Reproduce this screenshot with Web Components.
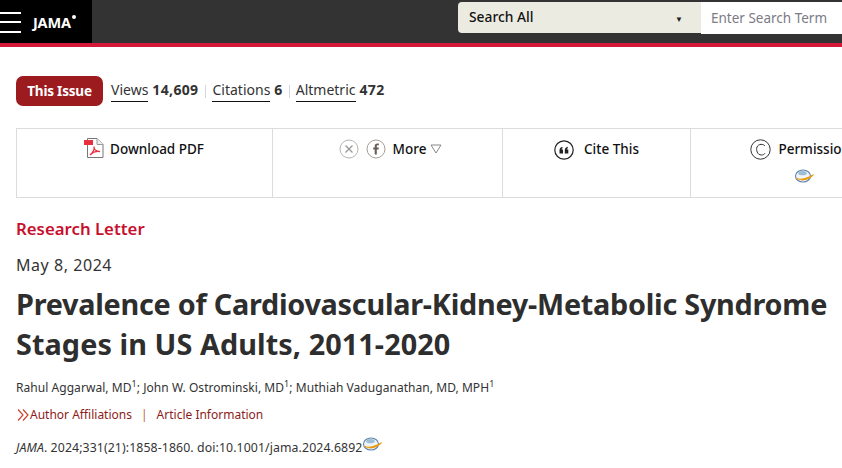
<!DOCTYPE html>
<html lang="en">
<head>
<meta charset="utf-8">
<title>JAMA</title>
<style>
html, body { margin: 0; height: 468px; overflow: hidden; background: #fff; }
body { font-family: "Noto Sans", sans-serif; color: #333; width: 842px; }
</style>
</head>
<body>
<site-header></site-header>
<article-page></article-page>

<script>
const crossrefIcon = (w) => `<svg width="${w}" viewBox="0 0 20 14" aria-hidden="true" style="display:block"><ellipse cx="9" cy="7" rx="7.500" ry="6" fill="#eef4f9" stroke="#5f84aa" stroke-width="1.100"/><ellipse cx="8.500" cy="4.200" rx="4.200" ry="2.100" fill="#9dbcd6"/><path d="M2 9.200C6 11 12.500 10 19.500 5.600 15.500 10 11 11.200 7 10.800" fill="#f0a020" stroke="#eb9a12" stroke-width="1.100"/></svg>`;

class SiteHeader extends HTMLElement {
    connectedCallback() {
        if (this.shadowRoot) return;
        let shadowRoot = this.attachShadow({mode: 'open'});
        shadowRoot.innerHTML = `
        <style>
            :host { display: flex; height: 43px; background: #333; border-bottom: 4px solid #d5173a; width: 842px; overflow: hidden; }
            .brand { width: 92px; background: #000; display: flex; align-items: center; gap: 12px; flex: none; }
            .burger { width: 21px; height: 21px; display: flex; flex-direction: column; justify-content: space-between; margin-top: 1px; }
            .burger i { display: block; height: 2px; background: #fff; }
            .logo { color: #fff; font: 700 14.500px "Noto Sans", sans-serif; letter-spacing: -.2px; margin-top: 1px; display: flex; }
            .logo i { width: 4px; height: 4px; border-radius: 50%; background: #fff; margin: 3px 0 0 1px; }
            .search { margin-left: 366px; margin-top: 2px; display: flex; height: 31px; flex: none; }
            .select { width: 243px; height: 31px; box-sizing: border-box; background: #ecebe2; border-radius: 4px 0 0 4px; display: flex; justify-content: space-between; padding: 0 18px 2px 11px; align-items: center; font-size: 13.800px; font-weight: 500; color: #111; }
            .select b { font-size: 8px; color: #222; margin-top: 3px; }
            .input { width: 141px; height: 32px; box-sizing: border-box; background: #fff; padding-left: 10px; display: flex; align-items: center; font-size: 13.500px; color: #7b7b86; }
        </style>
        <div class="brand">
            <div class="burger"><i></i><i></i><i></i></div>
            <div class="logo"><span>JAMA</span><i></i></div>
        </div>
        <div class="search">
            <div class="select"><span>Search All</span><b>▼</b></div>
            <div class="input">Enter Search Term</div>
        </div>`;
    }
}

class MetricLink extends HTMLElement {
    connectedCallback() {
        if (this.shadowRoot) return;
        let shadowRoot = this.attachShadow({mode: 'open'});
        shadowRoot.innerHTML = `
        <style>
            :host { display: inline-flex; gap: 4px; align-items: baseline; font-size: 14px; color: #333; }
            span { border-bottom: 1px solid #111; padding-bottom: 2px; }
            b { font-weight: 700; letter-spacing: .35px; }
        </style>
        <span>${this.getAttribute('label')}</span><b>${this.getAttribute('value')}</b>`;
    }
}

class MetricsBar extends HTMLElement {
    connectedCallback() {
        if (this.shadowRoot) return;
        let shadowRoot = this.attachShadow({mode: 'open'});
        shadowRoot.innerHTML = `
        <style>
            :host { display: flex; align-items: center; height: 30px; margin: 29px 0 0 16px; }
            .badge { width: 87px; height: 30px; background: #9b1b1f; color: #fff; border-radius: 7px; font-size: 13.500px; font-weight: 700; display: flex; align-items: center; justify-content: center; margin-right: 8px; letter-spacing: -.2px; }
            i { width: 1px; height: 13px; background: #d2d5dc; margin: 0 6px 0 7px; }
        </style>
        <div class="badge">This Issue</div>
        <metric-link label="Views" value="14,609"></metric-link><i></i>
        <metric-link label="Citations" value="6"></metric-link><i style="margin-left:6px"></i>
        <metric-link label="Altmetric" value="472"></metric-link>`;
    }
}

class ToolCell extends HTMLElement {
    connectedCallback() {
        if (this.shadowRoot) return;
        let shadowRoot = this.attachShadow({mode: 'open'});
        shadowRoot.innerHTML = `
        <style>
            :host { display: flex; flex-direction: column; align-items: center; box-sizing: border-box; height: 68px; border-right: 1px solid #dcdcdc; padding-top: 8px; flex: none; color: #111; font-size: 13.500px; font-weight: 500; white-space: nowrap; }
            :host(:last-child) { border-right: 0; }
            .row { display: flex; align-items: center; gap: 7px; height: 24px; }
            .below { margin-top: 8px; height: 14px; display: flex; }
        </style>
        <div class="row"><slot></slot></div>
        <div class="below"><slot name="below"></slot></div>`;
    }
}

class ActionToolbar extends HTMLElement {
    connectedCallback() {
        if (this.shadowRoot) return;
        let shadowRoot = this.attachShadow({mode: 'open'});
        shadowRoot.innerHTML = `
        <style>
            :host { display: flex; margin: 22px 0 0 16px; height: 70px; border: 1px solid #dcdcdc; border-width: 1px 0 1px 1px; box-sizing: border-box; width: 826px; overflow: hidden; }
            svg { display: block; flex: none; }
        </style>
        <tool-cell style="width:254px;margin-right:1px;border-right:0">
            <svg width="20" height="20" viewBox="0 0 20 20" aria-hidden="true" style="margin-right:-1px;margin-top:-3px"><path d="M3.500 .5H13L19 6.500V19.500H3.500Z" fill="#fff" stroke="#777" stroke-width="1"/><path d="M13 .5V6.500H19" fill="#eee" stroke="#999"/><rect x="0" y="2" width="9" height="5" fill="#e8303c"/><path d="M6 17C9 14.500 10.500 11 10 8.500 10 11 12 13.500 16 13.700 12.500 13 8.500 14.500 6 17Z" fill="none" stroke="#e8303c" stroke-width="1.200"/></svg>
            <span>Download PDF</span>
        </tool-cell>
        <tool-cell style="width:231px;padding-left:6px;border-left:1px solid #dcdcdc">
            <svg width="20" height="20" viewBox="0 0 20 20" aria-hidden="true"><circle cx="10" cy="10" r="9" fill="none" stroke="#b9b4ae"/><path d="M6.500 6.500L13.500 13.500M13.500 6.500L6.500 13.500" stroke="#9a9a9a" stroke-width="1.400"/></svg>
            <svg width="20" height="20" viewBox="0 0 20 20" aria-hidden="true"><circle cx="10" cy="10" r="9" fill="none" stroke="#a89e94"/><path d="M10.800 15.500V10.400H12.600L12.800 8.500H10.800V7.300C10.800 6.700 11 6.300 11.900 6.300H12.900V4.600H11.300C9.600 4.600 8.700 5.600 8.700 7.100V8.500H7.200V10.400H8.700V15.500Z" fill="#6a5f57"/></svg>
            <span>More</span>
            <svg width="12" height="10" viewBox="0 0 12 10" aria-hidden="true" style="margin-left:-3px"><path d="M1 1H11L6 9Z" fill="none" stroke="#888"/></svg>
        </tool-cell>
        <tool-cell style="width:188px">
            <svg width="20" height="20" viewBox="0 0 20 20" aria-hidden="true" style="margin:1px 3px 0 0"><circle cx="10" cy="10" r="9.200" fill="none" stroke="#222" stroke-width="1.200"/><path d="M5.500 13.500V10.200C5.500 8.400 6.600 7.300 8.500 6.800V8.300C7.800 8.600 7.500 9 7.500 9.600H9V13.500ZM10.800 13.500V10.200C10.800 8.400 11.900 7.300 13.800 6.800V8.300C13.100 8.600 12.800 9 12.800 9.600H14.300V13.500Z" fill="#222"/></svg>
            <span>Cite This</span>
        </tool-cell>
        <tool-cell style="width:225px">
            <svg width="21" height="21" viewBox="0 0 21 21" aria-hidden="true"><circle cx="10.500" cy="10.500" r="9.700" fill="none" stroke="#333" stroke-width="1"/><path d="M15 7C13.500 4.800 8.500 4.500 7 8 6 10.800 7 16 11.500 16 13 16 14.300 15.300 15 14.300" fill="none" stroke="#333" stroke-width="1"/></svg>
            <span>Permissions</span>
            <span slot="below" id="pm"></span>
        </tool-cell>`;
        shadowRoot.getElementById('pm').innerHTML = crossrefIcon(20);
    }
}

class ArticleHead extends HTMLElement {
    connectedCallback() {
        if (this.shadowRoot) return;
        let shadowRoot = this.attachShadow({mode: 'open'});
        shadowRoot.innerHTML = `
        <style>
            :host { display: block; margin: 18px 0 0 16px; width: 826px; }
            .kind { color: #c8102e; font-size: 16.800px; font-weight: 600; line-height: 26px; margin: 0; }
            .date { font-size: 16px; line-height: 24px; margin-top: 11px; color: #333; letter-spacing: .55px; }
            h1 { margin: 7px 0 0; font-size: 28.800px; line-height: 40px; font-weight: 700; color: #2e2e2e; letter-spacing: -.25px; white-space: nowrap; }
            h1 span { letter-spacing: .08px; }
            .authors { font-size: 12px; line-height: 18px; margin-top: 15px; color: #333; letter-spacing: .05px; }
            sup { font-size: 9px; line-height: 0; }
            .links { display: flex; align-items: center; font-size: 12px; line-height: 18px; margin-top: 9px; color: #8c1c20; }
            .links svg { margin: 0 0 0 1px; }
            .links i { font-style: normal; color: #c46a2c; margin: 0 9px; }
            .cite { display: flex; align-items: flex-start; font-size: 12.300px; line-height: 18px; margin-top: 15px; color: #333; letter-spacing: .1px; }
            .cite span:last-child { margin-top: -2px; }
        </style>
        <p class="kind">Research Letter</p>
        <div class="date">May 8, 2024</div>
        <h1>Prevalence of Cardiovascular-Kidney-Metabolic Syndrome<br><span>Stages in US Adults, 2011-2020</span></h1>
        <div class="authors">Rahul Aggarwal, MD<sup>1</sup>; John W. Ostrominski, MD<sup>1</sup>; Muthiah Vaduganathan, MD, MPH<sup>1</sup></div>
        <div class="links">
            <svg width="13" height="12" viewBox="0 0 13 12" aria-hidden="true"><path d="M1 .5L6 6 1 11.500M6 .5L11 6 6 11.500" fill="none" stroke="#c8452e" stroke-width="1.200"/></svg>
            <span>Author Affiliations</span><i>|</i><span>Article Information</span>
        </div>
        <div class="cite"><span><em>JAMA</em>. 2024;331(21):1858-1860. doi:10.1001/jama.2024.6892</span><span>${crossrefIcon(20)}</span></div>`;
    }
}

class ArticlePage extends HTMLElement {
    connectedCallback() {
        if (this.shadowRoot) return;
        let shadowRoot = this.attachShadow({mode: 'open'});
        shadowRoot.innerHTML = `
        <style>:host { display: block; }</style>
        <metrics-bar></metrics-bar>
        <action-toolbar></action-toolbar>
        <article-head></article-head>`;
    }
}

window.customElements.define('site-header', SiteHeader);
window.customElements.define('metric-link', MetricLink);
window.customElements.define('metrics-bar', MetricsBar);
window.customElements.define('tool-cell', ToolCell);
window.customElements.define('action-toolbar', ActionToolbar);
window.customElements.define('article-head', ArticleHead);
window.customElements.define('article-page', ArticlePage);
</script>
</body>
</html>
